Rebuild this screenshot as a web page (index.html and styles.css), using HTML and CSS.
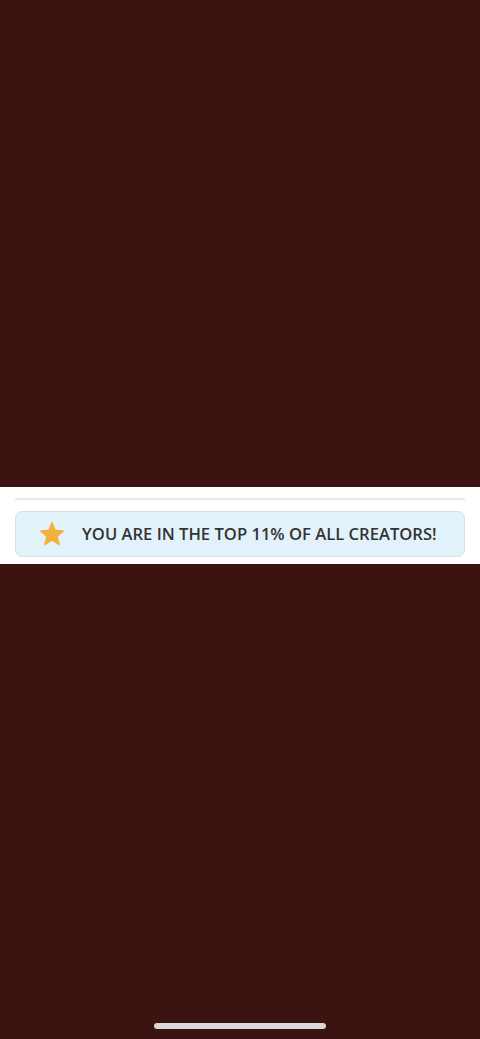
FILE: index.html
```html
<!DOCTYPE html>
<html lang="en">
<head>
    <meta charset="UTF-8">
    <meta name="viewport" content="width=device-width, initial-scale=1.0">
    <title>Creator Rank</title>
    <link rel="stylesheet" href="styles.css">
</head>
<body>
    <div class="screen">
        <div class="band">
            <div class="divider"></div>
            <div class="rank-card">
                <svg class="star" viewBox="0 0 24 24" width="28" height="28">
                    <path d="M12 1l3.2 7.3 7.9.7-6 5.2 1.8 7.8L12 17.9l-6.9 4.1 1.8-7.8-6-5.2 7.9-.7z" fill="#f2b13a"/>
                </svg>
                <span class="rank-text">YOU ARE IN THE TOP 11% OF ALL CREATORS!</span>
            </div>
        </div>
        <div class="home-indicator"></div>
    </div>
</body>
</html>
```

FILE: styles.css
```css
html, body {
    margin: 0;
    padding: 0;
}

body {
    background-color: #3b1310;
    font-family: 'Open Sans', 'Noto Sans', sans-serif;
}

.screen {
    height: 1039px;
    display: flex;
    flex-direction: column;
}

.band {
    margin-top: 487px;
    background: white;
    padding: 11px 15px 7px;
}

.divider {
    height: 1.5px;
    background: #e8e8e8;
}

.rank-card {
    margin-top: 11px;
    height: 44px;
    display: flex;
    align-items: center;
    background: #e2f2fa;
    border: 1px solid #cfe3ee;
    border-radius: 7px;
    padding-left: 22px;
}

.star {
    flex-shrink: 0;
}

.rank-text {
    margin-left: 16px;
    font-size: 16.6px;
    font-weight: 600;
    color: #333333;
    letter-spacing: 0;
}

.home-indicator {
    margin: auto auto 10px;
    width: 172px;
    height: 6px;
    border-radius: 3px;
    background: #d9d9d9;
}
```
